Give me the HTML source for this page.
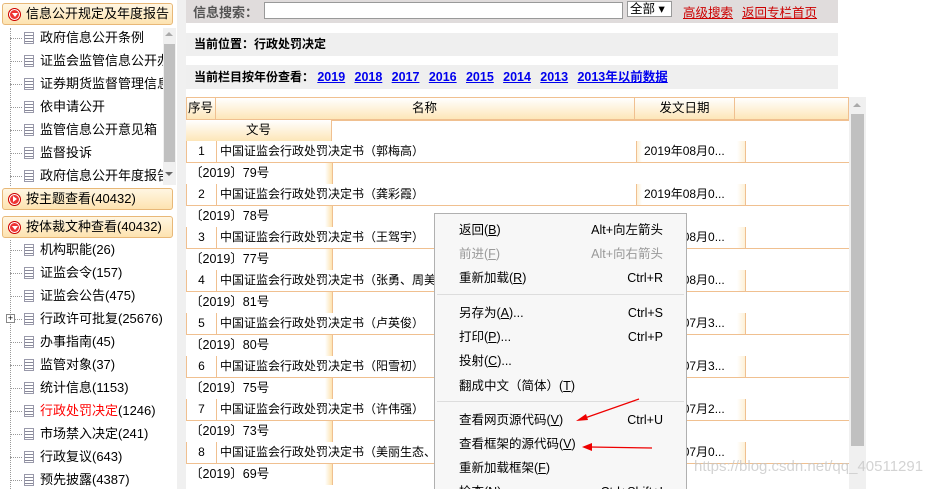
<!DOCTYPE html>
<html><head><meta charset="utf-8"><style>
*{margin:0;padding:0;box-sizing:border-box}
html,body{width:944px;height:489px;overflow:hidden}
body{background:#fff;font-family:"Liberation Sans","Noto Sans CJK SC",sans-serif;font-size:12px;color:#000;position:relative}
.a{position:absolute;white-space:nowrap}
.side{position:absolute;left:0;top:0;width:177px;height:489px;background:#fff;overflow:hidden}
.hd{position:absolute;left:2px;width:171px;height:22px;border:1px solid #e8b878;border-radius:3px;background:linear-gradient(#fff6e2,#fde3b0);font-size:13px;line-height:20px;padding-left:23px}
.hd i{position:absolute;left:5px;top:4px;width:13px;height:13px;border-radius:50%;background:#e33;border:1px solid #c00;box-shadow:0 0 0 1px #fff inset}
.hd i:after{content:"";position:absolute;left:3px;top:4px;border:3px solid transparent;border-top:4px solid #fff}
.hd i.r:after{left:4px;top:2px;border:3px solid transparent;border-left:4px solid #fff}
.it{position:absolute;left:10px;width:153px;overflow:hidden;font-size:13px;height:20px;line-height:20px;padding-left:30px;white-space:nowrap}
.it:before{content:"";position:absolute;left:0;top:10px;width:12px;border-top:1px dotted #999}
.it b{position:absolute;left:14px;top:4px;width:10px;height:12px;border:1px solid #99a;background:repeating-linear-gradient(#fff 0 2px,#889 2px 3px)}
.vl{position:absolute;left:10px;border-left:1px dotted #999}
.bar{position:absolute;background:#efefef;font-weight:bold;font-size:12px;padding-left:8px}
.yr a{color:#0000ee;text-decoration:underline;margin-right:6px;font-size:12.5px}
.nr{position:absolute;left:186px;width:663px;height:22px;border-left:1px solid #f0c090;border-bottom:1px solid #f0c090;line-height:21px;font-size:12px}
.nr .n{position:absolute;left:0;width:30px;text-align:center;border-right:1px solid #f0c090;height:21px}
.nr .t{position:absolute;left:33px}
.nr .d{position:absolute;left:449px;width:110px;height:21px;border-left:1px solid #f0c090;border-right:1px solid #f0c090;padding-left:7px;background:linear-gradient(90deg,#fdf0d6,#fff 5px,#fff 100px,#fdf0d6)}
.dr{position:absolute;left:186px;width:663px;height:21px;line-height:21px;padding-left:4px;font-size:12.5px}
.dr:after{content:"";position:absolute;left:139px;top:0;width:7px;height:21px;background:linear-gradient(90deg,#fff,#fde3b0);border-right:1px solid #f0c090}
.menu{position:absolute;left:434px;top:213px;width:253px;height:290px;background:#f7f7f7;border:1px solid #b0b0b0;font-size:12.5px}
.mi{position:absolute;left:24px;width:204px;height:20px;line-height:20px}
.mi span{position:absolute;right:0}
.sep{position:absolute;left:2px;right:2px;border-top:1px solid #ddd}
</style></head><body>
<div class="a" style="left:177px;top:0;width:9px;height:489px;background:#f0f0f0"></div>
<div class="side">
 <div class="hd" style="top:3px"><i></i>信息公开规定及年度报告</div>
 <div class="vl" style="top:28px;height:158px"></div>
 <div class="it" style="top:28px"><b></b>政府信息公开条例</div>
 <div class="it" style="top:51px"><b></b>证监会监管信息公开办法</div>
 <div class="it" style="top:74px"><b></b>证券期货监督管理信息公</div>
 <div class="it" style="top:97px"><b></b>依申请公开</div>
 <div class="it" style="top:120px"><b></b>监管信息公开意见箱</div>
 <div class="it" style="top:143px"><b></b>监督投诉</div>
 <div class="it" style="top:166px"><b></b>政府信息公开年度报告</div>
 <div class="a" style="left:163px;top:28px;width:13px;height:157px;background:#f0f0f0"></div>
 <div class="a" style="left:164px;top:44px;width:11px;height:118px;background:#c0c0c0"></div>
 <div class="a" style="left:165px;top:32px;border:4px solid transparent;border-bottom:4px solid #aaa;border-top:0"></div>
 <div class="a" style="left:165px;top:172px;border:4px solid transparent;border-top:4px solid #666;border-bottom:0"></div>
 <div class="hd" style="top:188px"><i class="r"></i>按主题查看(40432)</div>
 <div class="hd" style="top:216px"><i></i>按体裁文种查看(40432)</div>
 <div class="vl" style="top:240px;height:249px"></div>
 <div class="it" style="top:240px"><b></b>机构职能(26)</div>
 <div class="it" style="top:263px"><b></b>证监会令(157)</div>
 <div class="it" style="top:286px"><b></b>证监会公告(475)</div>
 <div class="it" style="top:309px"><b></b>行政许可批复(25676)</div>
 <div class="a" style="left:6px;top:314px;width:9px;height:9px;border:1px solid #888;background:#fff;font-size:9px;line-height:7px;text-align:center">+</div>
 <div class="it" style="top:332px"><b></b>办事指南(45)</div>
 <div class="it" style="top:355px"><b></b>监管对象(37)</div>
 <div class="it" style="top:378px"><b></b>统计信息(1153)</div>
 <div class="it" style="top:401px"><b></b><span style="color:#f00">行政处罚决定</span>(1246)</div>
 <div class="it" style="top:424px"><b></b>市场禁入决定(241)</div>
 <div class="it" style="top:447px"><b></b>行政复议(643)</div>
 <div class="it" style="top:470px"><b></b>预先披露(4387)</div>
</div>

<div class="a" style="left:186px;top:0;width:652px;height:23px;background:#e0dcdc"></div>
<div class="a" style="left:193px;top:2px;font-size:13px;color:#555;font-weight:bold">信息搜索：</div>
<div class="a" style="left:264px;top:2px;width:359px;height:17px;background:#fff;border:1px solid #999"></div>
<div class="a" style="left:627px;top:1px;width:45px;height:16px;background:#fff;border:1px solid #999;font-size:12.5px;line-height:14px;padding-left:2px">全部 ▾</div>
<div class="a" style="left:683px;top:2px;color:#c00;text-decoration:underline;font-size:12.5px">高级搜索</div>
<div class="a" style="left:742px;top:2px;color:#c00;text-decoration:underline;font-size:12.5px">返回专栏首页</div>

<div class="bar" style="left:186px;top:33px;width:652px;height:23px;line-height:23px">当前位置：行政处罚决定</div>
<div class="bar yr" style="left:186px;top:65px;width:652px;height:24px;line-height:24px">当前栏目按年份查看： <a>2019</a> <a>2018</a> <a>2017</a> <a>2016</a> <a>2015</a> <a>2014</a> <a>2013</a> <a>2013年以前数据</a></div>

<div class="a" style="left:186px;top:97px;width:663px;height:23px;border:1px solid #f0c090;background:linear-gradient(#fff,#fde6b8)"></div>
<div class="a" style="left:186px;top:97px;width:30px;height:23px;border-right:1px solid #f0c090;font-size:12.5px;line-height:23px;text-align:center">序号</div>
<div class="a" style="left:412px;top:97px;line-height:23px;font-size:12.5px">名称</div>
<div class="a" style="left:634px;top:97px;width:101px;height:23px;border-left:1px solid #f0c090;border-right:1px solid #f0c090;line-height:23px;text-align:center;font-size:12.5px">发文日期</div>
<div class="a" style="left:186px;top:120px;width:146px;height:21px;background:linear-gradient(#fff,#fde6b8);border-right:1px solid #f0c090;text-align:center;line-height:21px;font-size:12.5px">文号</div>
<div class="a" style="left:332px;top:120px;width:517px;border-top:1px solid #f0c090"></div>

<div class="nr" style="top:141px"><div class="n">1</div><div class="t">中国证监会行政处罚决定书（郭梅高）</div><div class="d">2019年08月0...</div></div>
<div class="dr" style="top:163px">〔2019〕79号</div>
<div class="nr" style="top:184px"><div class="n">2</div><div class="t">中国证监会行政处罚决定书（龚彩霞）</div><div class="d">2019年08月0...</div></div>
<div class="dr" style="top:206px">〔2019〕78号</div>
<div class="nr" style="top:227px"><div class="n">3</div><div class="t">中国证监会行政处罚决定书（王驾宇）</div><div class="d">2019年08月0...</div></div>
<div class="dr" style="top:249px">〔2019〕77号</div>
<div class="nr" style="top:270px"><div class="n">4</div><div class="t">中国证监会行政处罚决定书（张勇、周美</div><div class="d">2019年08月0...</div></div>
<div class="dr" style="top:292px">〔2019〕81号</div>
<div class="nr" style="top:313px"><div class="n">5</div><div class="t">中国证监会行政处罚决定书（卢英俊）</div><div class="d">2019年07月3...</div></div>
<div class="dr" style="top:335px">〔2019〕80号</div>
<div class="nr" style="top:356px"><div class="n">6</div><div class="t">中国证监会行政处罚决定书（阳雪初）</div><div class="d">2019年07月3...</div></div>
<div class="dr" style="top:378px">〔2019〕75号</div>
<div class="nr" style="top:399px"><div class="n">7</div><div class="t">中国证监会行政处罚决定书（许伟强）</div><div class="d">2019年07月2...</div></div>
<div class="dr" style="top:421px">〔2019〕73号</div>
<div class="nr" style="top:442px"><div class="n">8</div><div class="t">中国证监会行政处罚决定书（美丽生态、</div><div class="d">2019年07月0...</div></div>
<div class="dr" style="top:464px">〔2019〕69号</div>

<div class="a" style="left:849px;top:97px;width:17px;height:392px;background:#f0f0f0"></div>
<div class="a" style="left:851px;top:114px;width:13px;height:332px;background:#c0c0c0"></div>
<div class="a" style="left:853px;top:103px;border:4px solid transparent;border-bottom:4px solid #aaa;border-top:0"></div>

<div class="menu">
 <div class="mi" style="top:6px">返回(<u>B</u>)<span>Alt+向左箭头</span></div>
 <div class="mi" style="top:30px;color:#999">前进(<u>F</u>)<span>Alt+向右箭头</span></div>
 <div class="mi" style="top:54px">重新加载(<u>R</u>)<span>Ctrl+R</span></div>
 <div class="sep" style="top:80px"></div>
 <div class="mi" style="top:89px">另存为(<u>A</u>)...<span>Ctrl+S</span></div>
 <div class="mi" style="top:113px">打印(<u>P</u>)...<span>Ctrl+P</span></div>
 <div class="mi" style="top:137px">投射(<u>C</u>)...</div>
 <div class="mi" style="top:162px">翻成中文（简体）(<u>T</u>)</div>
 <div class="sep" style="top:187px"></div>
 <div class="mi" style="top:196px">查看网页源代码(<u>V</u>)<span>Ctrl+U</span></div>
 <div class="mi" style="top:220px">查看框架的源代码(<u>V</u>)</div>
 <div class="mi" style="top:244px">重新加载框架(<u>F</u>)</div>
 <div class="mi" style="top:268px">检查(N)<span>Ctrl+Shift+I</span></div>
</div>
<svg class="a" style="left:0;top:0" width="944" height="489">
 <line x1="639" y1="399" x2="582" y2="419" stroke="#e00" stroke-width="1.2"/>
 <polygon points="576,421 586,414 588,420" fill="#e00"/>
 <line x1="652" y1="448" x2="590" y2="447" stroke="#e00" stroke-width="1.2"/>
 <polygon points="582,447 592,443 592,451" fill="#e00"/>
</svg>
<div class="a" style="left:694px;top:458px;font-size:15px;color:rgba(200,200,200,0.8)">https://blog.csdn.net/qq_40511291</div>
</body></html>
